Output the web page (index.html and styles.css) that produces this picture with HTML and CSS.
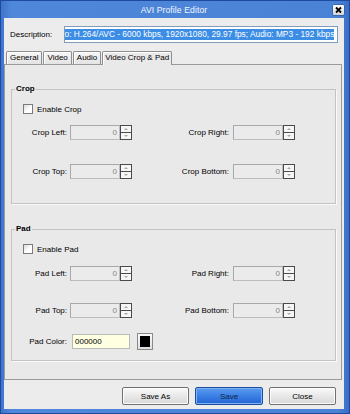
FILE: index.html
```html
<!DOCTYPE html>
<html>
<head>
<meta charset="utf-8">
<link rel="stylesheet" href="styles.css">
</head>
<body>
<div class="window">
  <div class="titlebar">
    <span></span>
    <span class="title">AVI Profile Editor</span>
    <span class="closebtn"><svg width="11" height="10" viewBox="0 0 11 10"><path d="M3 2.5 L8 7.5 M8 2.5 L3 7.5" stroke="#000" stroke-width="1.8"/></svg></span>
  </div>
  <div class="client">
    <div class="desc-row">
      <span class="desc-label">Description:</span>
      <div class="desc-input"><span class="sel">Video: H.264/AVC - 6000 kbps, 1920x1080, 29.97 fps; Audio: MP3 - 192 kbps</span></div>
    </div>
    <div class="tabs">
      <div class="tab">General</div>
      <div class="tab">Video</div>
      <div class="tab">Audio</div>
      <div class="tab active">Video Crop &amp; Pad</div>
    </div>
    <div class="panel">
      <fieldset class="group crop">
        <legend>Crop</legend>
        <div class="check"><span class="box"></span>Enable Crop</div>
        <div class="row r-first">
          <span class="lbl l1">Crop Left:</span>
          <div class="spin"><span class="field">0</span><span class="arrows"><svg width="12" height="15" viewBox="0 0 12 15"><rect x="0.5" y="0.5" width="11" height="14" fill="#f6f6f6" stroke="#4a4a4a"/><line x1="1" y1="7.5" x2="11" y2="7.5" stroke="#4a4a4a"/><path d="M4 5 L6 3 L8 5 Z M4 10 L6 12 L8 10 Z" fill="#a8a8a8"/></svg></span></div>
          <span class="lbl l2">Crop Right:</span>
          <div class="spin"><span class="field">0</span><span class="arrows"><svg width="12" height="15" viewBox="0 0 12 15"><rect x="0.5" y="0.5" width="11" height="14" fill="#f6f6f6" stroke="#4a4a4a"/><line x1="1" y1="7.5" x2="11" y2="7.5" stroke="#4a4a4a"/><path d="M4 5 L6 3 L8 5 Z M4 10 L6 12 L8 10 Z" fill="#a8a8a8"/></svg></span></div>
        </div>
        <div class="row r-crop2">
          <span class="lbl l1">Crop Top:</span>
          <div class="spin"><span class="field">0</span><span class="arrows"><svg width="12" height="15" viewBox="0 0 12 15"><rect x="0.5" y="0.5" width="11" height="14" fill="#f6f6f6" stroke="#4a4a4a"/><line x1="1" y1="7.5" x2="11" y2="7.5" stroke="#4a4a4a"/><path d="M4 5 L6 3 L8 5 Z M4 10 L6 12 L8 10 Z" fill="#a8a8a8"/></svg></span></div>
          <span class="lbl l2">Crop Bottom:</span>
          <div class="spin"><span class="field">0</span><span class="arrows"><svg width="12" height="15" viewBox="0 0 12 15"><rect x="0.5" y="0.5" width="11" height="14" fill="#f6f6f6" stroke="#4a4a4a"/><line x1="1" y1="7.5" x2="11" y2="7.5" stroke="#4a4a4a"/><path d="M4 5 L6 3 L8 5 Z M4 10 L6 12 L8 10 Z" fill="#a8a8a8"/></svg></span></div>
        </div>
      </fieldset>
      <fieldset class="group pad">
        <legend>Pad</legend>
        <div class="check"><span class="box"></span>Enable Pad</div>
        <div class="row r-padfirst">
          <span class="lbl l1">Pad Left:</span>
          <div class="spin"><span class="field">0</span><span class="arrows"><svg width="12" height="15" viewBox="0 0 12 15"><rect x="0.5" y="0.5" width="11" height="14" fill="#f6f6f6" stroke="#4a4a4a"/><line x1="1" y1="7.5" x2="11" y2="7.5" stroke="#4a4a4a"/><path d="M4 5 L6 3 L8 5 Z M4 10 L6 12 L8 10 Z" fill="#a8a8a8"/></svg></span></div>
          <span class="lbl l2">Pad Right:</span>
          <div class="spin"><span class="field">0</span><span class="arrows"><svg width="12" height="15" viewBox="0 0 12 15"><rect x="0.5" y="0.5" width="11" height="14" fill="#f6f6f6" stroke="#4a4a4a"/><line x1="1" y1="7.5" x2="11" y2="7.5" stroke="#4a4a4a"/><path d="M4 5 L6 3 L8 5 Z M4 10 L6 12 L8 10 Z" fill="#a8a8a8"/></svg></span></div>
        </div>
        <div class="row r-pad2">
          <span class="lbl l1">Pad Top:</span>
          <div class="spin"><span class="field">0</span><span class="arrows"><svg width="12" height="15" viewBox="0 0 12 15"><rect x="0.5" y="0.5" width="11" height="14" fill="#f6f6f6" stroke="#4a4a4a"/><line x1="1" y1="7.5" x2="11" y2="7.5" stroke="#4a4a4a"/><path d="M4 5 L6 3 L8 5 Z M4 10 L6 12 L8 10 Z" fill="#a8a8a8"/></svg></span></div>
          <span class="lbl l2">Pad Bottom:</span>
          <div class="spin"><span class="field">0</span><span class="arrows"><svg width="12" height="15" viewBox="0 0 12 15"><rect x="0.5" y="0.5" width="11" height="14" fill="#f6f6f6" stroke="#4a4a4a"/><line x1="1" y1="7.5" x2="11" y2="7.5" stroke="#4a4a4a"/><path d="M4 5 L6 3 L8 5 Z M4 10 L6 12 L8 10 Z" fill="#a8a8a8"/></svg></span></div>
        </div>
        <div class="row r-pad3">
          <span class="lbl l1">Pad Color:</span>
          <span class="color-input">000000</span>
          <span class="swatch"><span class="swatch-inner"></span></span>
        </div>
      </fieldset>
    </div>
    <div class="buttons">
      <div class="btn">Save As</div>
      <div class="btn primary">Save</div>
      <div class="btn">Close</div>
    </div>
  </div>
</div>
</body>
</html>
```

FILE: styles.css
```css
html, body {
  margin: 0;
  padding: 0;
}
body {
  width: 350px;
  height: 414px;
  overflow: hidden;
  font-family: "Liberation Sans", Arial, sans-serif;
  font-size: 8px;
  color: #000;
}
.window {
  width: 350px;
  height: 414px;
  box-sizing: border-box;
  border: 1px solid #1d4a9e;
  background: linear-gradient(to right, #3f74cc, #4f88da 3%, #4a82d6 97%, #3a6dc5);
  padding: 0 5px 4px 3px;
  display: flex;
  flex-direction: column;
}
.titlebar {
  height: 17px;
  display: grid;
  grid-template-columns: 1fr auto 1fr;
  align-items: center;
}
.title {
  color: #f2f6ff;
  font-size: 8.6px;
  letter-spacing: 0.1px;
}
.closebtn {
  justify-self: end;
  width: 11px;
  height: 10px;
  box-sizing: border-box;
  background: linear-gradient(#ffffff, #d6d6d6);
  border-radius: 1px;
  box-shadow: 0 0 0 0.5px #2a4f90;
  display: flex;
}
.client {
  flex: 1;
  background: #ececec;
  display: flex;
  flex-direction: column;
}
.desc-row {
  display: flex;
  align-items: center;
  height: 17px;
  margin-top: 8px;
  padding-left: 6px;
}
.desc-label {
  width: 54px;
}
.desc-input {
  width: 274px;
  height: 17px;
  box-sizing: border-box;
  border: 1px solid #7f9db9;
  background: #fff;
  overflow: hidden;
  white-space: nowrap;
  padding: 2px 1px;
}
.sel {
  display: inline-block;
  background: #3c8de6;
  color: #fff;
  font-size: 8.35px;
  line-height: 11px;
  margin-left: -18px;
}
.tabs {
  display: flex;
  align-items: flex-end;
  gap: 1px;
  height: 13px;
  margin-top: 8px;
  padding-left: 2px;
  position: relative;
  z-index: 1;
}
.tab {
  height: 13px;
  box-sizing: border-box;
  border: 1px solid #8d8d8d;
  border-bottom: none;
  border-radius: 2px 2px 0 0;
  background: linear-gradient(#f7f7f7, #e3e3e3);
  box-shadow: inset 1px 1px 0 #fff;
  padding: 0 3px;
  line-height: 12px;
}
.tab.active {
  height: 14px;
  margin-bottom: -1px;
  background: #e9e9e9;
  padding: 0 2px;
}
.panel {
  height: 316px;
  box-sizing: border-box;
  border: 1px solid #9a9a9a;
  background: #e9e9e9;
  margin-right: 2px;
  padding: 19px 5px 0 6px;
}
.group {
  margin: 0;
  padding: 0;
  border: 1px solid #c3c3c3;
  box-shadow: 1px 1px 0 #fafafa;
  box-sizing: border-box;
  min-width: 0;
}
.group legend {
  font-weight: bold;
  line-height: 10px;
  padding: 0 1px;
  margin-left: 3px;
}
.crop {
  height: 120px;
}
.pad {
  height: 137px;
  margin-top: 20px;
}
.check {
  display: flex;
  align-items: center;
  height: 10px;
  margin-top: 10px;
  padding-left: 11px;
  gap: 4px;
}
.box {
  width: 10px;
  height: 10px;
  box-sizing: border-box;
  border: 1px solid #7b7b7b;
  background: linear-gradient(135deg, #dcdcdc, #ffffff 60%);
}
.row {
  display: flex;
  align-items: center;
  height: 15px;
}
.r-first { margin-top: 11px; }
.r-crop2 { margin-top: 24px; }
.r-padfirst { margin-top: 12px; }
.r-pad2 { margin-top: 22px; }
.r-pad3 { margin-top: 16px; }
.lbl {
  box-sizing: border-box;
  text-align: right;
  white-space: nowrap;
}
.l1 {
  width: 58px;
  padding-right: 3px;
}
.l2 {
  width: 101px;
  padding-right: 4px;
}
.spin {
  display: flex;
  width: 62px;
  height: 15px;
}
.field {
  flex: 1;
  box-sizing: border-box;
  border: 1px solid #bdbdbd;
  border-top-color: #a8a8a8;
  border-left-color: #a8a8a8;
  background: #ebebeb;
  color: #858585;
  text-align: right;
  padding-right: 2px;
  line-height: 13px;
}
.arrows {
  width: 12px;
  height: 15px;
  display: flex;
}
.color-input {
  width: 58px;
  height: 15px;
  box-sizing: border-box;
  margin-left: 2px;
  border: 1px solid #b9b9b9;
  background: #ffffe1;
  padding-left: 2px;
  line-height: 13px;
}
.swatch {
  width: 16px;
  height: 17px;
  box-sizing: border-box;
  margin-left: 7px;
  border: 1px solid #8a8a8a;
  background: linear-gradient(#fbfbfb, #dedede);
  display: flex;
  align-items: center;
  justify-content: center;
}
.swatch-inner {
  width: 10px;
  height: 11px;
  background: #000;
}
.buttons {
  display: flex;
  justify-content: flex-end;
  gap: 6px;
  margin-top: 7px;
  padding-right: 8px;
}
.btn {
  width: 67px;
  height: 18px;
  box-sizing: border-box;
  border: 1px solid #707070;
  border-radius: 2px;
  background: linear-gradient(#fafafa, #e8e8e8 50%, #d8d8d8);
  box-shadow: inset 0 0 0 1px #fcfcfc;
  display: flex;
  align-items: center;
  justify-content: center;
}
.btn.primary {
  width: 68px;
  border-color: #1b4f9e;
  background: linear-gradient(#5c9cf0, #3a7fe4 50%, #2565d2);
  box-shadow: inset 0 0 0 1px #7fb2f4;
  color: #10244a;
}
```
